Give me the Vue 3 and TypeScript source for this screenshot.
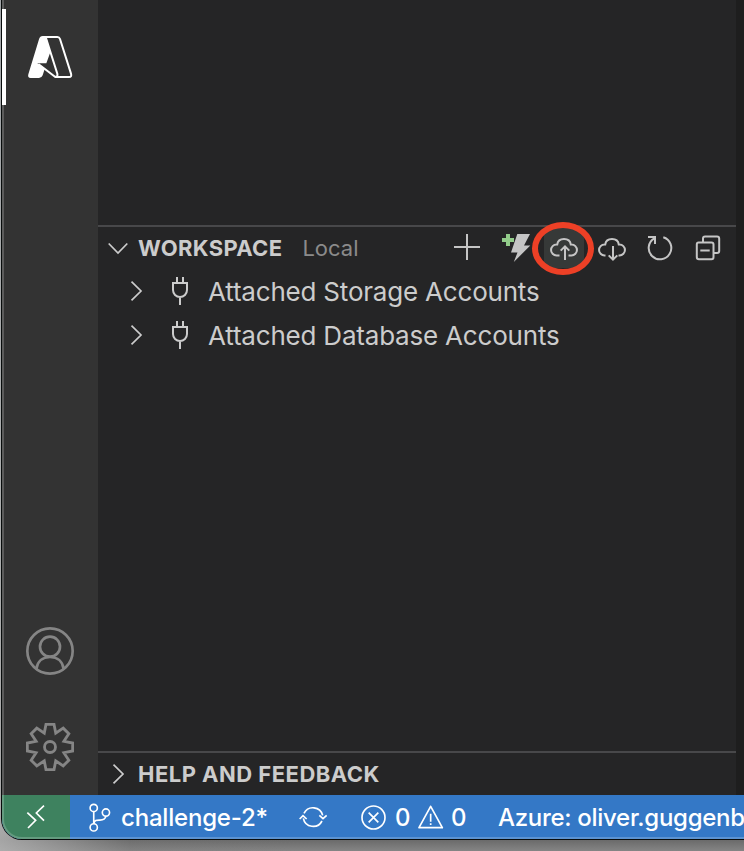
<script setup lang="ts">
interface TreeItem {
  id: string
  label: string
}

const items: TreeItem[] = [
  { id: 'storage', label: 'Attached Storage Accounts' },
  { id: 'database', label: 'Attached Database Accounts' },
]

// Eight-toothed gear outline centred on the origin.
const gearPoints: string = Array.from({ length: 8 }, (_, k) => {
  const at = (radius: number, degrees: number): string => {
    const a = ((k * 45 + degrees) * Math.PI) / 180
    return `${(radius * Math.sin(a)).toFixed(1)},${(-radius * Math.cos(a)).toFixed(1)}`
  }
  return [at(69, -10), at(69, 10), at(45, 22.5)].join(' ')
}).join(' ')
</script>

<template>
  <div class="desktop">
    <div class="window">
      <div class="workbench">
        <nav class="activity">
          <div class="activity-item active">
            <svg class="big" viewBox="78 99 144 144">
              <path class="solid" d="M128 108H138L151 157 139 190H112L134 207 128 226Q125 234 117 234H92Q82 234 85 223L117 118Q120 108 128 108Z" />
              <path class="azure-line" d="M137 111H172Q178 111 180 117L213 221Q216 231 207 231H166L115 192M137 111 172 221Q174 230 166 231" />
            </svg>
          </div>
          <div class="activity-bottom">
            <div class="activity-item">
              <svg class="big" viewBox="78 51 144 144">
                <g class="thick">
                  <circle cx="150" cy="123" r="68" />
                  <circle cx="150" cy="110" r="30" />
                  <path d="M109 177C112 155 127 141 150 141S188 155 191 177" />
                </g>
              </svg>
            </div>
            <div class="activity-item">
              <svg class="big" viewBox="-72 -72 144 144">
                <g class="thick gear">
                  <polygon :points="gearPoints" />
                  <circle r="16.5" />
                </g>
              </svg>
            </div>
          </div>
        </nav>

        <aside class="sidebar">
          <section class="pane">
            <header class="pane-header">
              <svg class="chevron" viewBox="0 0 20 20"><path d="M.7 5.5 10 15l9.3-9.5" /></svg>
              <h2 class="title workspace">WORKSPACE</h2>
              <span class="local">Local</span>
              <div class="actions">
                <button class="action" aria-label="Add">
                  <svg viewBox="0 0 32 32"><path d="M2 15H28M15 2V28" /></svg>
                </button>
                <button class="action" aria-label="Create function">
                  <svg viewBox="0 0 32 32">
                    <path class="bolt" d="M17.3 2H30L24 13.5H30.3L13.8 30 17.5 20.5H11Z" />
                    <path class="green-plus" d="M2 8H14M8 2V14" />
                  </svg>
                </button>
                <button class="action highlighted" aria-label="Deploy">
                  <svg viewBox="0 0 32 32">
                    <path d="M11.5 23.4H8.5A5.4 5.4 0 0 1 8.5 12.5H9.2C9.7 9 12.5 7 16 7S22.3 9 22.8 12.5H23.5A5.4 5.4 0 0 1 23.5 23.4H20.5M17 28V14.5M12.7 18.6 17 14.3 21.3 18.6" />
                  </svg>
                  <span class="ring"></span>
                </button>
                <button class="action" aria-label="Download">
                  <svg viewBox="0 0 32 32">
                    <path d="M9.5 23.4H8.5A5.4 5.4 0 0 1 8.5 12.5H9.2C9.7 9 12.5 7 16 7S22.3 9 22.8 12.5H23.5A5.4 5.4 0 0 1 23.5 23.4H22.5M17 14V27.5M12.7 23.4 17 27.7 21.3 23.4" />
                  </svg>
                </button>
                <button class="action" aria-label="Refresh">
                  <svg viewBox="0 0 32 32"><path d="M19.3 5.2A11.3 11.3 0 1 1 10.2 6.3M4 5H11V12" /></svg>
                </button>
                <button class="action" aria-label="Collapse">
                  <svg viewBox="0 0 32 32">
                    <path d="M6.5 10.5H19.5Q21.5 10.5 21.5 12.5V25Q21.5 27.2 19.5 27.2H7Q4.8 27.2 4.8 25V12.5Q4.8 10.5 6.5 10.5ZM11 10V6.5Q11 4.5 13 4.5H25Q27.2 4.5 27.2 6.5V19Q27.2 21 25 21H22M8.3 18.6H17.7" />
                  </svg>
                </button>
              </div>
            </header>
            <ul class="tree">
              <li v-for="item in items" :key="item.id" class="row">
                <svg class="chevron" viewBox="0 0 20 20"><path d="M5.5.7 15 10 5.5 19.3" /></svg>
                <svg class="plug" viewBox="0 0 18 30">
                  <path d="M6 1V7M12 1V7M2 7H16V14A7 7 0 0 1 2 14ZM9 21V29" />
                </svg>
                <span class="label">{{ item.label }}</span>
              </li>
            </ul>
          </section>
          <section class="pane help">
            <header class="pane-header">
              <svg class="chevron" viewBox="0 0 20 20"><path d="M5.5.7 15 10 5.5 19.3" /></svg>
              <h2 class="title feedback">HELP AND FEEDBACK</h2>
            </header>
          </section>
        </aside>
        <main class="editor"></main>
      </div>

      <footer class="status">
        <div class="remote">
          <svg viewBox="72 188 72 84"><path d="M82 217 107 240 84 263M132 196 109 218 132 241" /></svg>
        </div>
        <div class="status-item branch">
          <svg class="branch-icon" viewBox="267 187 66 88">
            <circle cx="281" cy="202" r="11" /><circle cx="318" cy="216" r="11" /><circle cx="281" cy="261" r="11" />
            <path d="M281 213V250C283 238 291 239 300 239 311 239 316 236 318 227" />
          </svg>
          <span class="branch-name">challenge-2*</span>
        </div>
        <div class="status-item sync">
          <svg class="sync-icon" viewBox="58 44 84 72">
            <path d="M73 69A30 30 0 0 1 129 75M127 92A30 30 0 0 1 71 84M60 86 70 76 81 86M119 75 130 85 141 75" />
          </svg>
        </div>
        <div class="status-item problems">
          <svg class="error-icon" viewBox="243 44 75 75"><circle cx="280.5" cy="81.5" r="34.5" /><path d="M266 67 295 96M295 67 266 96" /></svg>
          <span class="errors">0</span>
          <svg class="warning-icon" viewBox="413 43 78 72"><path d="M451 47 416 111H486ZM451 69V93M451 98V103" /></svg>
          <span>0</span>
        </div>
        <div class="status-item account">Azure: oliver.guggenb</div>
      </footer>
    </div>
  </div>
</template>

<style>
body {
  margin: 0;
  overflow: hidden;
}
</style>

<style scoped>
* {
  box-sizing: border-box;
}
.desktop {
  width: 744px;
  height: 851px;
  padding-left: 2px;
  overflow: hidden;
  background: linear-gradient(90deg, rgba(185, 185, 185, 0.75), rgba(120, 120, 120, 0.2) 130px, transparent 300px),
    linear-gradient(#64707a 0, #8b9292 500px, #858585 820px, #6a6a6a 840px, #858585 851px);
  font-family: Inter, "Liberation Sans", sans-serif;
  color: #ccc;
}
.window {
  position: relative;
  width: 742px;
  height: 839px;
  display: flex;
  flex-direction: column;
  overflow: hidden;
  border-bottom-left-radius: 20px;
  box-shadow: 0 0 0 1px #080c0c;
}
.window::after {
  content: "";
  position: absolute;
  inset: -2px -2px 0 0;
  border: 2px solid rgba(255, 255, 255, 0.2);
  border-top: 0;
  border-right: 0;
  border-bottom-left-radius: 20px;
  pointer-events: none;
}
.workbench {
  height: 795px;
  display: flex;
}
.activity {
  width: 96px;
  background: #333;
  display: flex;
  flex-direction: column;
  justify-content: space-between;
  padding-top: 9px;
}
.activity-item {
  height: 96px;
  display: flex;
  align-items: center;
  justify-content: center;
  color: #858585;
}
.active {
  position: relative;
  color: #fff;
  border-left: 4px solid #fff;
  padding-right: 4px;
  z-index: 1;
}
.big {
  width: 48px;
  height: 48px;
}
.solid {
  fill: currentColor;
  stroke: none;
}
.azure-line {
  stroke-width: 6;
}
.thick {
  stroke-width: 8;
}
.gear {
  stroke-width: 8.5;
  stroke-linejoin: miter;
}
svg {
  display: block;
  flex: none;
  fill: none;
  stroke: currentColor;
  stroke-width: 2;
}
.sidebar {
  width: 638px;
  background: #252526;
  padding-top: 225px;
  display: flex;
  flex-direction: column;
  justify-content: space-between;
}
.editor {
  flex: 1;
  background: #1e1e1e;
}
.pane-header {
  height: 44px;
  border-top: 2px solid #48484a;
  padding-left: 10px;
  display: flex;
  align-items: center;
}
.chevron {
  width: 20px;
  height: 20px;
  stroke-width: 1.7;
}
.title {
  margin: 0 0 0 10px;
  font-size: 22px;
  line-height: 28px;
  font-weight: 700;
  white-space: nowrap;
}
.workspace {
  letter-spacing: 0.35px;
}
.feedback {
  letter-spacing: 0.48px;
}
.local {
  margin-left: 20px;
  font-size: 22px;
  line-height: 28px;
  color: #8b8b8b;
}
.actions {
  margin-left: auto;
  margin-right: 8px;
  display: flex;
  gap: 8px;
}
.action {
  position: relative;
  width: 40px;
  height: 40px;
  padding: 4px;
  border: 0;
  border-radius: 6px;
  background: transparent;
  color: #c5c5c5;
}
.action svg {
  width: 32px;
  height: 32px;
}
.highlighted {
  background: #363938;
}
.ring {
  position: absolute;
  left: -12px;
  top: -6px;
  width: 62px;
  height: 53px;
  border: 6px solid #ed4026;
  border-radius: 50%;
}
.bolt {
  fill: currentColor;
  stroke: none;
}
.green-plus {
  stroke: #92cc8a;
  stroke-width: 4;
}
.tree {
  list-style: none;
  margin: 0;
  padding: 0;
}
.row {
  height: 44px;
  padding-left: 28px;
  display: flex;
  align-items: center;
}
.plug {
  width: 18px;
  height: 30px;
  margin-left: 25px;
}
.label {
  margin-left: 19px;
  padding-top: 1px;
  font-size: 26px;
  line-height: 32px;
  letter-spacing: -0.2px;
  white-space: nowrap;
}
.status {
  height: 44px;
  display: flex;
  align-items: center;
  background: #3478c6;
  color: #fff;
  font-size: 24px;
  line-height: 30px;
  font-weight: 500;
  letter-spacing: -0.2px;
}
.remote {
  flex: none;
  width: 68px;
  height: 44px;
  display: flex;
  align-items: center;
  justify-content: center;
  background: #3e825f;
}
.remote svg {
  width: 24px;
  height: 28px;
  stroke-width: 5;
}
.status-item {
  display: flex;
  align-items: center;
  flex: none;
  white-space: nowrap;
}
.branch {
  width: 229px;
  padding-left: 19px;
}
.branch-icon {
  width: 22px;
  height: 29px;
  stroke-width: 5;
}
.branch-name {
  margin-left: 10px;
  padding-top: 1px;
}
.sync {
  width: 62px;
}
.sync-icon {
  width: 28px;
  height: 24px;
  stroke-width: 5;
}
.problems {
  width: 137px;
}
.problems span,
.account {
  padding-top: 1px;
}
.account {
  letter-spacing: -0.3px;
}
.error-icon {
  width: 25px;
  height: 25px;
  stroke-width: 5;
}
.errors {
  width: 23px;
  margin-left: 9px;
}
.warning-icon {
  width: 26px;
  height: 24px;
  margin-right: 7px;
  stroke-width: 5;
  stroke-linejoin: round;
}
</style>
